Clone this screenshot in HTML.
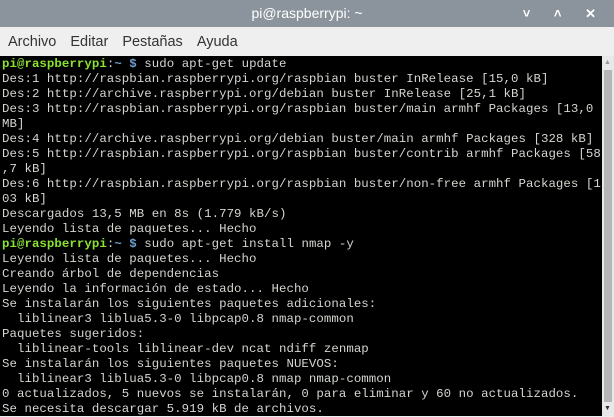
<html><head><style>
body{margin:0;width:614px;height:416px;overflow:hidden;background:#efefef;font-family:"Liberation Sans",sans-serif}
.t{position:absolute;left:0;top:0;width:614px;height:27px;background:#8b949c;color:#fff;font-size:14px;text-align:center;line-height:27px}
.m{position:absolute;left:0;top:27px;width:614px;height:29px;background:#efefef;font-size:14.5px;color:#333;line-height:31px}
.m span{margin-left:8px;margin-right:2px}
.term{position:absolute;left:0;top:56px;width:602px;height:360px;background:#000;color:#d3d7cf;font-family:"Liberation Mono",monospace;font-size:12.4px;letter-spacing:0.05px;line-height:15px;white-space:pre;padding-left:2px;padding-top:1px;box-sizing:border-box}
.g{color:#8ae234;font-weight:bold}.b{color:#729fcf;font-weight:bold}
.sb{position:absolute;left:602px;top:56px;width:12px;height:360px;background:#e8e8e8}
.th{position:absolute;left:604px;top:70px;width:8px;height:332px;background:#b5b5b5}
</style></head><body>
<div class="t">pi@raspberrypi: ~<span style="position:absolute;right:8px;top:0;font-size:13px;font-weight:bold;letter-spacing:10px">˅ ˄ ✕</span></div>
<div class="m"><span>Archivo</span> <span>Editar</span> <span>Pestañas</span> <span>Ayuda</span></div>
<div class="term"><span class="g">pi@raspberrypi</span>:<span class="b">~ $</span> sudo apt-get update
Des:1 http://raspbian.raspberrypi.org/raspbian buster InRelease [15,0 kB]
Des:2 http://archive.raspberrypi.org/debian buster InRelease [25,1 kB]
Des:3 http://raspbian.raspberrypi.org/raspbian buster/main armhf Packages [13,0
MB]
Des:4 http://archive.raspberrypi.org/debian buster/main armhf Packages [328 kB]
Des:5 http://raspbian.raspberrypi.org/raspbian buster/contrib armhf Packages [58
,7 kB]
Des:6 http://raspbian.raspberrypi.org/raspbian buster/non-free armhf Packages [1
03 kB]
Descargados 13,5 MB en 8s (1.779 kB/s)
Leyendo lista de paquetes... Hecho
<span class="g">pi@raspberrypi</span>:<span class="b">~ $</span> sudo apt-get install nmap -y
Leyendo lista de paquetes... Hecho
Creando árbol de dependencias
Leyendo la información de estado... Hecho
Se instalarán los siguientes paquetes adicionales:
  liblinear3 liblua5.3-0 libpcap0.8 nmap-common
Paquetes sugeridos:
  liblinear-tools liblinear-dev ncat ndiff zenmap
Se instalarán los siguientes paquetes NUEVOS:
  liblinear3 liblua5.3-0 libpcap0.8 nmap nmap-common
0 actualizados, 5 nuevos se instalarán, 0 para eliminar y 60 no actualizados.
Se necesita descargar 5.919 kB de archivos.</div>
<div class="sb"></div><div class="th"></div>
<div style="position:absolute;left:604px;top:59px;font-size:7px;color:#999">▲</div>
<div style="position:absolute;left:604px;top:405px;font-size:7px;color:#333">▼</div>
</body></html>
